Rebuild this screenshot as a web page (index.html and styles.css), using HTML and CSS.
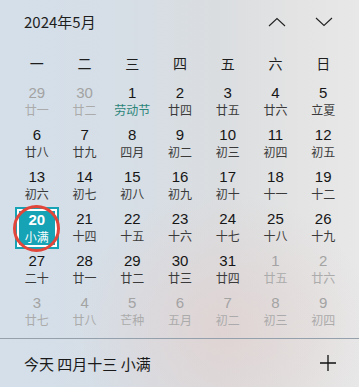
FILE: index.html
```html
<!DOCTYPE html>
<html lang="zh">
<head>
<meta charset="utf-8">
<link rel="stylesheet" href="styles.css">
</head>
<body>
<div class="panel">
  <div class="header">
    <span class="title">2024年5月</span>
    <div class="navs">
      <svg class="chev" width="18" height="10" viewBox="0 0 18 10"><path d="M1 9 L9 1.5 L17 9" fill="none" stroke="#222" stroke-width="1.1"/></svg>
      <svg class="chev" width="18" height="10" viewBox="0 0 18 10"><path d="M1 1 L9 8.5 L17 1" fill="none" stroke="#222" stroke-width="1.1"/></svg>
    </div>
  </div>
  <div class="weekdays">
    <span>一</span><span>二</span><span>三</span><span>四</span><span>五</span><span>六</span><span>日</span>
  </div>
  <div class="grid">
    <div class="cell dim"><span class="n">29</span><span class="l">廿一</span></div>
    <div class="cell dim"><span class="n">30</span><span class="l">廿二</span></div>
    <div class="cell"><span class="n">1</span><span class="l hol">劳动节</span></div>
    <div class="cell"><span class="n">2</span><span class="l">廿四</span></div>
    <div class="cell"><span class="n">3</span><span class="l">廿五</span></div>
    <div class="cell"><span class="n">4</span><span class="l">廿六</span></div>
    <div class="cell"><span class="n">5</span><span class="l">立夏</span></div>

    <div class="cell"><span class="n">6</span><span class="l">廿八</span></div>
    <div class="cell"><span class="n">7</span><span class="l">廿九</span></div>
    <div class="cell"><span class="n">8</span><span class="l">四月</span></div>
    <div class="cell"><span class="n">9</span><span class="l">初二</span></div>
    <div class="cell"><span class="n">10</span><span class="l">初三</span></div>
    <div class="cell"><span class="n">11</span><span class="l">初四</span></div>
    <div class="cell"><span class="n">12</span><span class="l">初五</span></div>

    <div class="cell"><span class="n">13</span><span class="l">初六</span></div>
    <div class="cell"><span class="n">14</span><span class="l">初七</span></div>
    <div class="cell"><span class="n">15</span><span class="l">初八</span></div>
    <div class="cell"><span class="n">16</span><span class="l">初九</span></div>
    <div class="cell"><span class="n">17</span><span class="l">初十</span></div>
    <div class="cell"><span class="n">18</span><span class="l">十一</span></div>
    <div class="cell"><span class="n">19</span><span class="l">十二</span></div>

    <div class="cell today"><span class="n">20</span><span class="l">小满</span><span class="ring"></span></div>
    <div class="cell"><span class="n">21</span><span class="l">十四</span></div>
    <div class="cell"><span class="n">22</span><span class="l">十五</span></div>
    <div class="cell"><span class="n">23</span><span class="l">十六</span></div>
    <div class="cell"><span class="n">24</span><span class="l">十七</span></div>
    <div class="cell"><span class="n">25</span><span class="l">十八</span></div>
    <div class="cell"><span class="n">26</span><span class="l">十九</span></div>

    <div class="cell"><span class="n">27</span><span class="l">二十</span></div>
    <div class="cell"><span class="n">28</span><span class="l">廿一</span></div>
    <div class="cell"><span class="n">29</span><span class="l">廿二</span></div>
    <div class="cell"><span class="n">30</span><span class="l">廿三</span></div>
    <div class="cell"><span class="n">31</span><span class="l">廿四</span></div>
    <div class="cell dim"><span class="n">1</span><span class="l">廿五</span></div>
    <div class="cell dim"><span class="n">2</span><span class="l">廿六</span></div>

    <div class="cell dim"><span class="n">3</span><span class="l">廿七</span></div>
    <div class="cell dim"><span class="n">4</span><span class="l">廿八</span></div>
    <div class="cell dim"><span class="n">5</span><span class="l">芒种</span></div>
    <div class="cell dim"><span class="n">6</span><span class="l">五月</span></div>
    <div class="cell dim"><span class="n">7</span><span class="l">初二</span></div>
    <div class="cell dim"><span class="n">8</span><span class="l">初三</span></div>
    <div class="cell dim"><span class="n">9</span><span class="l">初四</span></div>
  </div>
  <div class="footer">
    <span class="today-text">今天 四月十三 小满</span>
    <svg class="plus" width="16" height="16" viewBox="0 0 16 16"><path d="M8 0 V16 M0 8 H16" stroke="#111" stroke-width="1.3" fill="none"/></svg>
  </div>
</div>
</body>
</html>
```
FILE: styles.css
```css
* { box-sizing: border-box; }
html, body {
  margin: 0;
  padding: 0;
  width: 359px;
  height: 387px;
  overflow: hidden;
}
body {
  font-family: "Liberation Sans", "Noto Sans CJK SC", sans-serif;
  color: #1a1a1a;
  background:
    radial-gradient(ellipse 60% 50% at 62% 85%, rgba(226, 208, 206, 0.7), rgba(226, 208, 206, 0) 70%),
    linear-gradient(90deg, #d4dfea 0%, #d6dee6 35%, #dadde0 60%, #e4e4e4 85%, #e8e8e8 100%);
}
.panel {
  width: 359px;
  height: 387px;
  display: flex;
  flex-direction: column;
}
.header {
  height: 44px;
  display: flex;
  align-items: center;
  justify-content: space-between;
  padding: 0 26px 0 24px;
}
.title {
  font-family: "Noto Sans CJK SC", sans-serif;
  font-size: 15px;
  color: #1e1e1e;
  line-height: 20px;
}
.navs {
  display: flex;
  gap: 29px;
  align-items: center;
}
.chev { display: block; }
.weekdays {
  height: 37px;
  display: grid;
  grid-template-columns: repeat(7, 1fr);
  padding: 0 12px 0 13px;
  align-items: center;
  font-family: "Noto Sans CJK SC", sans-serif;
  font-size: 14px;
  color: #1e1e1e;
  text-align: center;
}
.grid {
  display: grid;
  grid-template-columns: repeat(7, 1fr);
  grid-auto-rows: 42px;
  padding: 0 12px 0 13px;
}
.cell {
  position: relative;
  display: flex;
  flex-direction: column;
  align-items: center;
  justify-content: center;
  margin: 0 1px;
  padding-bottom: 3px;
}
.n {
  font-family: "Liberation Sans", sans-serif;
  font-size: 15px;
  line-height: 17px;
  color: #161616;
}
.l {
  font-family: "Noto Sans CJK SC", sans-serif;
  font-size: 12px;
  line-height: 14px;
  margin-top: 2px;
  color: #3a3a3a;
}
.l.hol { color: #2b8579; }
.dim .n { color: #a3a3a3; }
.dim .l { color: #ababab; }
.today {
  background: #15a3b5;
  margin: 0 2px 0 2px;
  padding-bottom: 1px;
  box-shadow: inset 0 0 0 2px #15a3b5, inset 0 0 0 4px #ffffff;
}
.today .n {
  color: #ffffff;
  font-weight: 700;
}
.today .l { color: #ffffff; }
.ring {
  position: absolute;
  left: 50%;
  top: 50%;
  width: 47px;
  height: 47px;
  margin: -23.5px 0 0 -23.5px;
  border: 3px solid #e2453a;
  border-radius: 50%;
}
.footer {
  margin-top: 5px;
  border-top: 1px solid #94a1ad;
  flex: 1;
  display: flex;
  align-items: center;
  justify-content: space-between;
  padding: 0 23px 0 24px;
}
.today-text {
  font-family: "Noto Sans CJK SC", sans-serif;
  font-size: 15px;
  color: #1a1a1a;
}
.plus { display: block; }
```
